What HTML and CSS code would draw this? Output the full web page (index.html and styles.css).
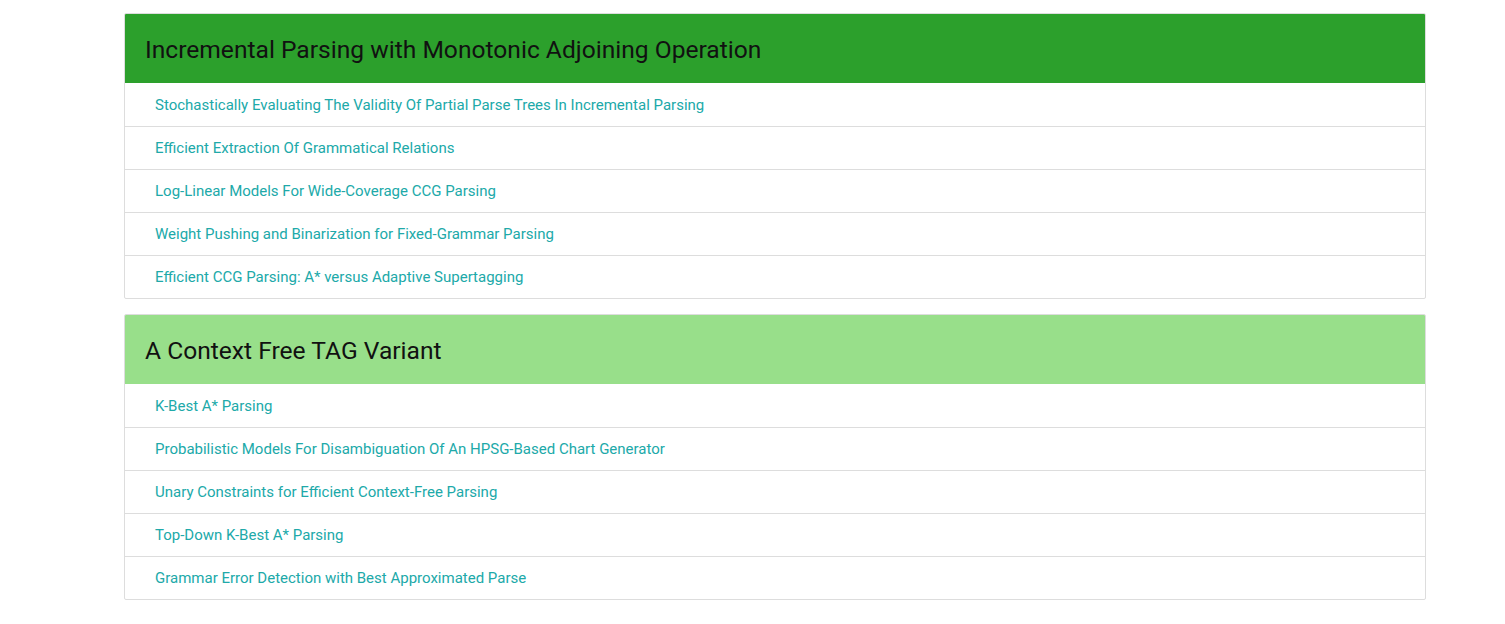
FILE: index.html
```html
<!DOCTYPE html>
<html>
<head>
<meta charset="utf-8">
<link rel="stylesheet" href="styles.css">
</head>
<body>
<div class="container">
  <div class="panel">
    <div class="panel-heading dark"><h2>Incremental Parsing with Monotonic Adjoining Operation</h2></div>
    <ul class="list">
      <li><a href="#">Stochastically Evaluating The Validity Of Partial Parse Trees In Incremental Parsing</a></li>
      <li><a href="#">Efficient Extraction Of Grammatical Relations</a></li>
      <li><a href="#">Log-Linear Models For Wide-Coverage CCG Parsing</a></li>
      <li><a href="#">Weight Pushing and Binarization for Fixed-Grammar Parsing</a></li>
      <li><a href="#">Efficient CCG Parsing: A* versus Adaptive Supertagging</a></li>
    </ul>
  </div>
  <div class="panel">
    <div class="panel-heading light"><h2>A Context Free TAG Variant</h2></div>
    <ul class="list">
      <li><a href="#">K-Best A* Parsing</a></li>
      <li><a href="#">Probabilistic Models For Disambiguation Of An HPSG-Based Chart Generator</a></li>
      <li><a href="#">Unary Constraints for Efficient Context-Free Parsing</a></li>
      <li><a href="#">Top-Down K-Best A* Parsing</a></li>
      <li><a href="#">Grammar Error Detection with Best Approximated Parse</a></li>
    </ul>
  </div>
</div>
</body>
</html>
```
FILE: styles.css
```css
* { box-sizing: border-box; }
body {
  margin: 0;
  background: #fff;
  font-family: Roboto, "Liberation Sans", sans-serif;
}
.container {
  width: 1302px;
  margin-left: 124px;
  padding-top: 13px;
}
.panel {
  border: 1px solid #dddddd;
  border-radius: 2px;
  margin-bottom: 15px;
  overflow: hidden;
}
.panel-heading {
  height: 69px;
  padding: 1px 20px 0;
  display: flex;
  align-items: center;
}
.panel-heading.dark { background: #2ca02c; }
.panel-heading.light { background: #98df8a; }
.panel-heading h2 {
  margin: 0;
  font-size: 24.6px;
  font-weight: 400;
  color: #111;
}
.list {
  list-style: none;
  margin: 0;
  padding: 0;
}
.list li {
  height: 43px;
  padding: 0 30px;
  display: flex;
  align-items: center;
  border-top: 1px solid #dddddd;
}
.list li:first-child { border-top: none; height: 43px; padding-top: 1px; }
.list a {
  color: #20a9a9;
  text-decoration: none;
  font-size: 15px;
}
```
